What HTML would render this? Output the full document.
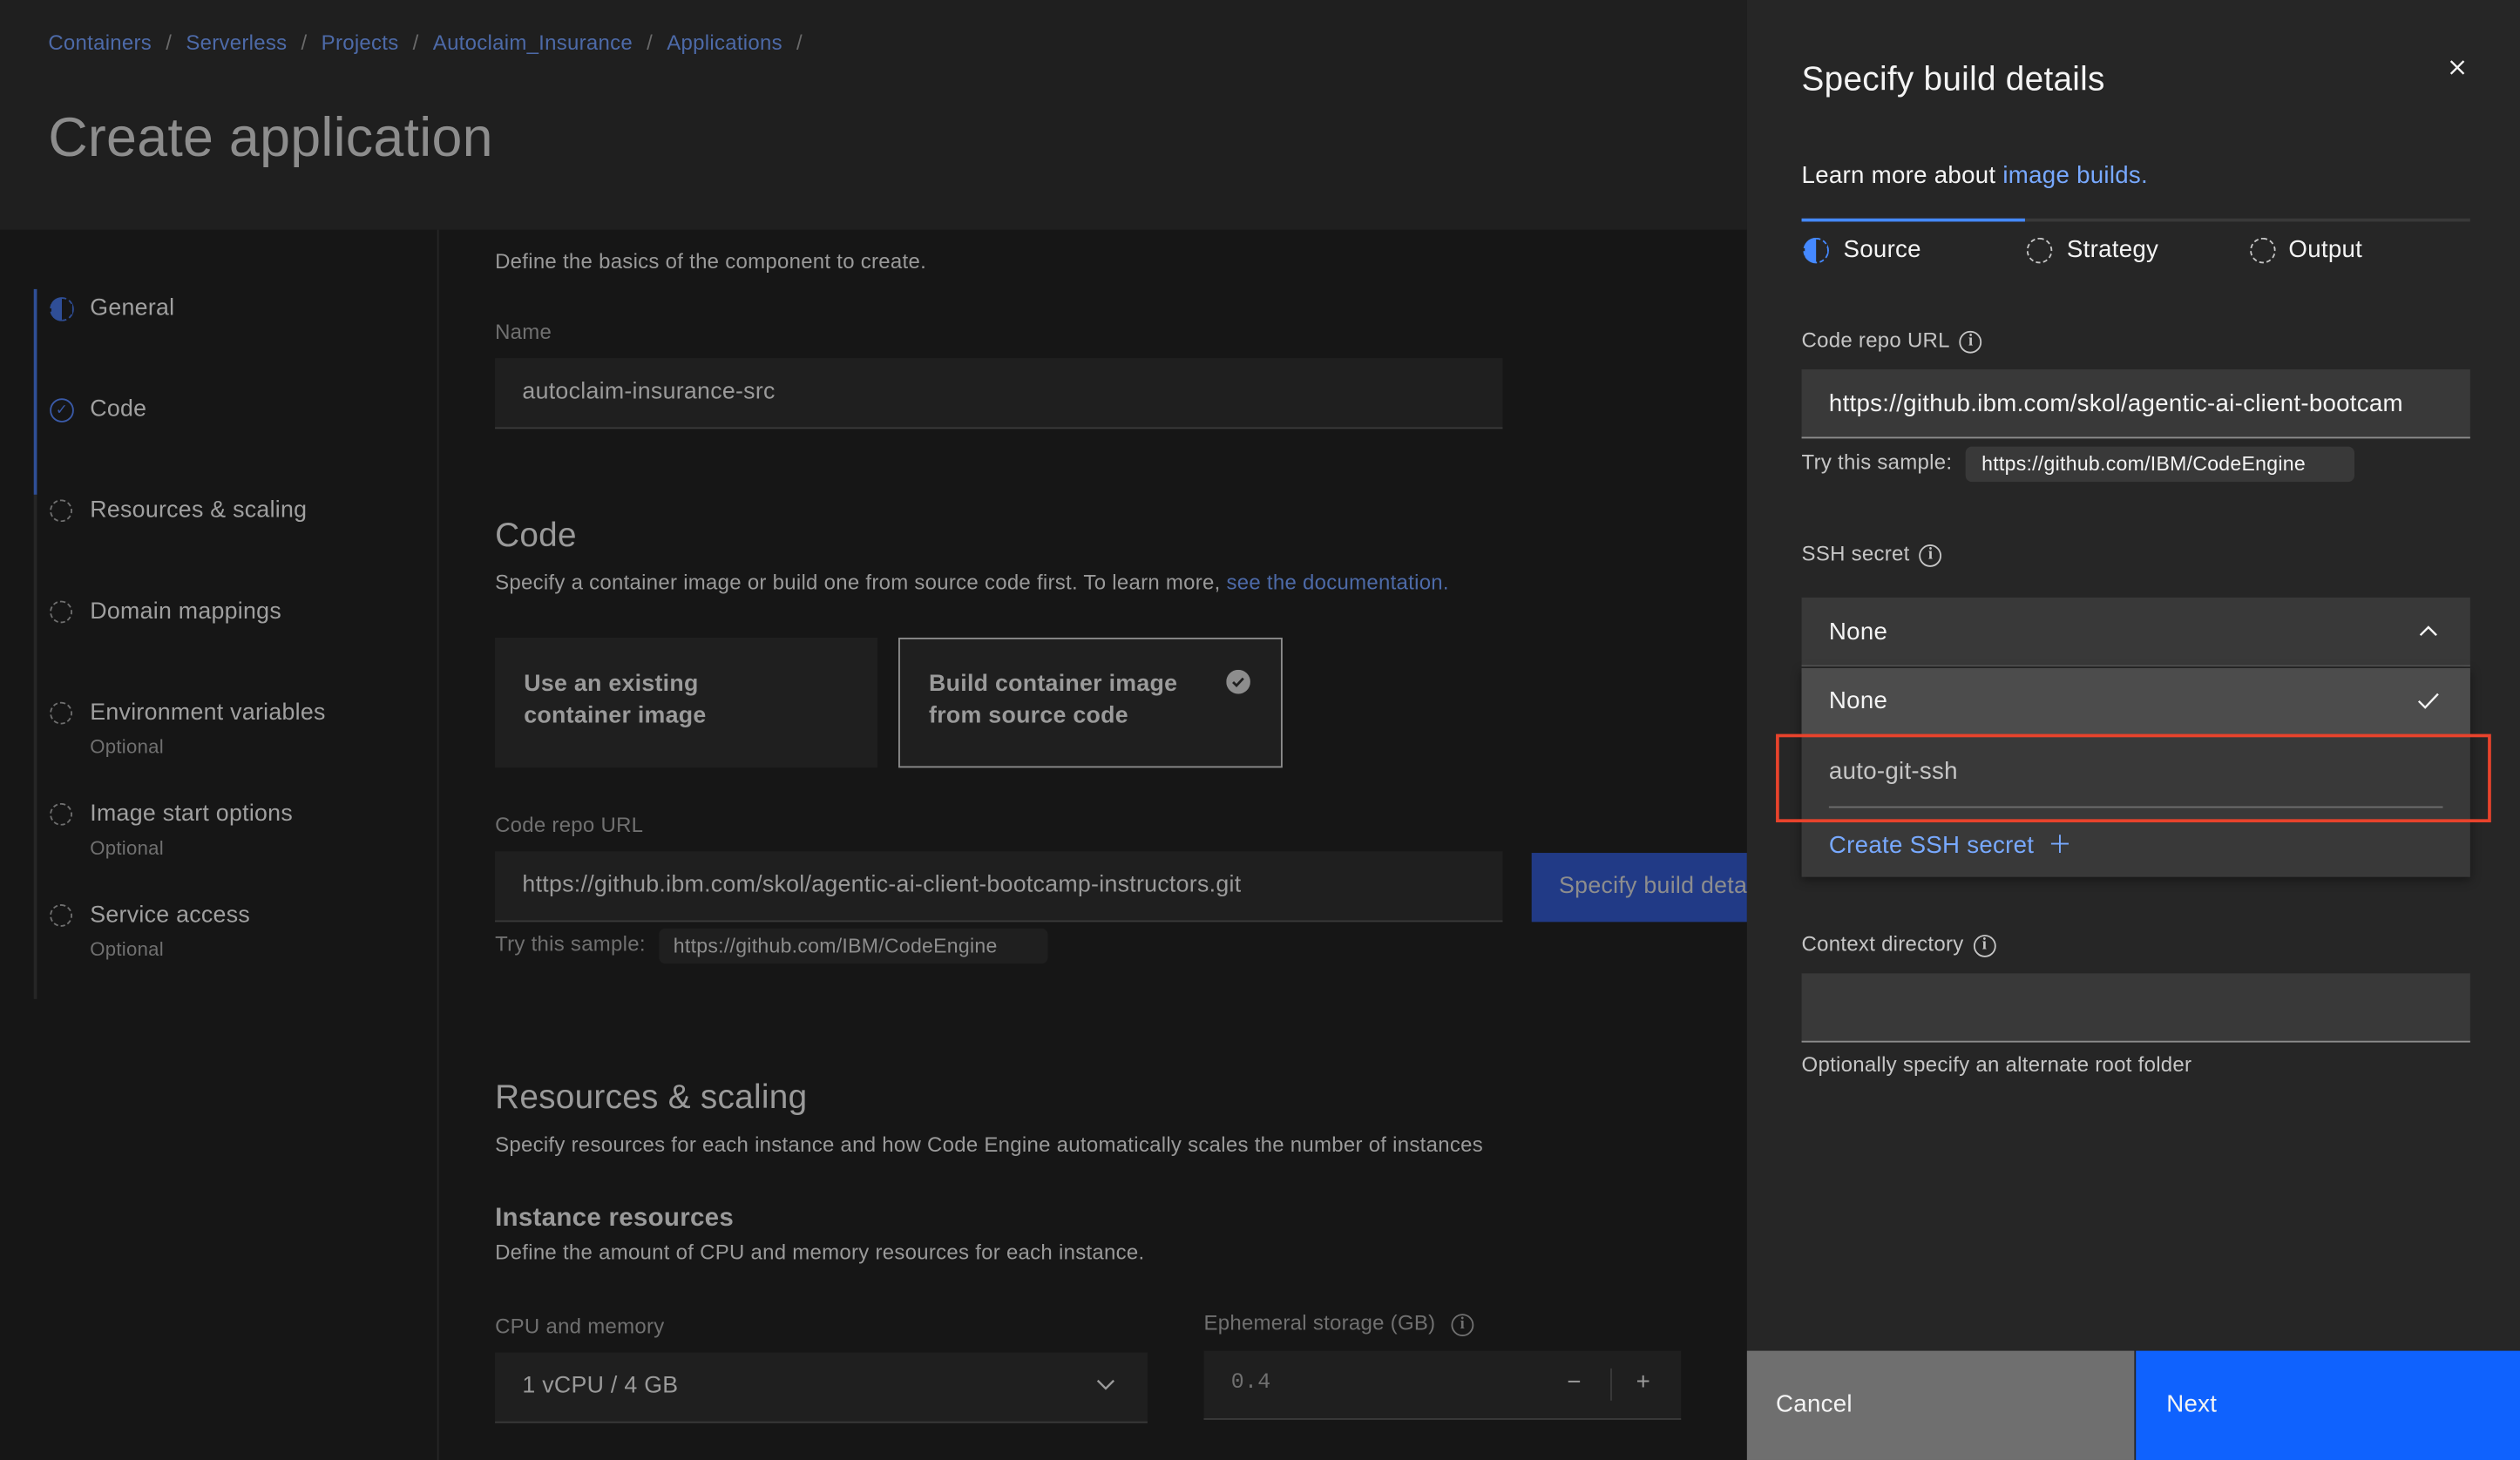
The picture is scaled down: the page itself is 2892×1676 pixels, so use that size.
<!DOCTYPE html><html><head><style>
*{margin:0;padding:0;box-sizing:border-box}
body{width:2892px;height:1676px;overflow:hidden;background:#161616;font-family:"Liberation Sans",sans-serif}
#w{width:1568px;height:909px;transform:scale(1.84439,1.84378);transform-origin:0 0;position:relative;background:#161616;letter-spacing:0.15px}
.a{position:absolute;white-space:nowrap}
.hd{left:0;top:0;width:1087px;height:143px;background:#1f1f1f}
.bc{color:#4d6aa8;font-size:13px;top:19px;word-spacing:1px}
.sl{color:#6a6a6a;margin:0 4px}
.g{color:#9a9a9a}
.gs{color:#707070;font-size:12px}
.fld{background:#1f1f1f;border-bottom:1px solid #3a3a3a}
.nav{color:#a0a0a0;font-size:14.5px}
.ic{width:14px;height:14px;border-radius:50%;border:1px dashed #6f6f6f}
.p{left:1087px;top:0;width:481px;height:909px;background:#262626}
.w1{color:#f4f4f4}.lb{color:#c6c6c6;font-size:13px}
.info{display:inline-block;width:14px;height:14px;border:1px solid #c6c6c6;border-radius:50%;font-size:10px;text-align:center;line-height:12px;color:#c6c6c6;vertical-align:middle;margin-left:6px;font-family:"Liberation Serif",serif;font-weight:bold}
</style></head><body><div id="w">
<div class="a hd"></div>
<div class="a bc" style="left:30px">Containers<span class="sl">&nbsp;/&nbsp;</span>Serverless<span class="sl">&nbsp;/&nbsp;</span>Projects<span class="sl">&nbsp;/&nbsp;</span>Autoclaim_Insurance<span class="sl">&nbsp;/&nbsp;</span>Applications<span class="sl">&nbsp;/</span></div>
<div class="a" style="left:30px;top:67px;font-size:34px;color:#8d8d8d;font-weight:300">Create application</div>
<div class="a" style="left:272px;top:143px;width:1px;height:766px;background:#262626"></div>
<div class="a" style="left:21px;top:180px;width:2px;height:128px;background:#2f4e96"></div>
<div class="a" style="left:21px;top:308px;width:2px;height:314px;background:#262626"></div>
<div class="a" style="left:31px;top:185px;width:15px;height:15px;border-radius:50%;border:1px dashed #2f4e96;background:linear-gradient(90deg,#2f4e96 50%,transparent 50%)"></div>
<div class="a nav" style="left:56px;top:184px">General</div>
<div class="a" style="left:31px;top:248px;width:15px;height:15px;border-radius:50%;border:1px solid #3a5aa8;color:#3a5aa8;font-size:9px;text-align:center;line-height:13px">✓</div>
<div class="a nav" style="left:56px;top:247px">Code</div>
<div class="a ic" style="left:31px;top:311px"></div><div class="a nav" style="left:56px;top:310px">Resources &amp; scaling</div>
<div class="a ic" style="left:31px;top:374px"></div><div class="a nav" style="left:56px;top:373px">Domain mappings</div>
<div class="a ic" style="left:31px;top:437px"></div><div class="a nav" style="left:56px;top:436px">Environment variables</div><div class="a gs" style="left:56px;top:458px">Optional</div>
<div class="a ic" style="left:31px;top:500px"></div><div class="a nav" style="left:56px;top:499px">Image start options</div><div class="a gs" style="left:56px;top:521px">Optional</div>
<div class="a ic" style="left:31px;top:563px"></div><div class="a nav" style="left:56px;top:562px">Service access</div><div class="a gs" style="left:56px;top:584px">Optional</div>

<div class="a g" style="left:308px;top:155px;font-size:13px">Define the basics of the component to create.</div>
<div class="a gs" style="left:308px;top:199px;font-size:13px">Name</div>
<div class="a fld" style="left:308px;top:223px;width:627px;height:44px"></div>
<div class="a g" style="left:325px;top:236px;font-size:14.5px">autoclaim-insurance-src</div>
<div class="a g" style="left:308px;top:322px;font-size:21px">Code</div>
<div class="a g" style="left:308px;top:355px;font-size:13px">Specify a container image or build one from source code first. To learn more, <span style="color:#4d6aa8">see the documentation.</span></div>
<div class="a" style="left:308px;top:397px;width:238px;height:81px;background:#1f1f1f"></div>
<div class="a g" style="left:326px;top:416px;font-size:14.5px;font-weight:bold;line-height:20px">Use an existing<br>container image</div>
<div class="a" style="left:559px;top:397px;width:239px;height:81px;background:#1f1f1f;border:1px solid #8d8d8d"></div>
<div class="a g" style="left:578px;top:416px;font-size:14.5px;font-weight:bold;line-height:20px">Build container image<br>from source code</div>
<svg class="a" style="left:763px;top:417px" width="15" height="15" viewBox="0 0 16 16"><circle cx="8" cy="8" r="8" fill="#8d8d8d"/><path d="M4.5 8.2l2.3 2.3 4.5-4.8" stroke="#1f1f1f" stroke-width="1.6" fill="none"/></svg>
<div class="a gs" style="left:308px;top:506px;font-size:13px">Code repo URL</div>
<div class="a fld" style="left:308px;top:530px;width:627px;height:44px"></div>
<div class="a g" style="left:325px;top:543px;font-size:14.5px">https://github.ibm.com/skol/agentic-ai-client-bootcamp-instructors.git</div>
<div class="a" style="left:953px;top:531px;width:134px;height:43px;background:#213a86;overflow:hidden"><span style="position:absolute;left:17px;top:13px;color:#8d8d8d;font-size:14.5px;white-space:nowrap">Specify build details</span></div>
<div class="a gs" style="left:308px;top:580px;font-size:13px">Try this sample:</div>
<div class="a" style="left:410px;top:578px;width:242px;height:22px;background:#1f1f1f;border-radius:4px;color:#8d8d8d;font-size:12.5px;padding:4px 9px">https://github.com/IBM/CodeEngine</div>
<div class="a g" style="left:308px;top:672px;font-size:21px">Resources &amp; scaling</div>
<div class="a g" style="left:308px;top:705px;font-size:13px">Specify resources for each instance and how Code Engine automatically scales the number of instances</div>
<div class="a g" style="left:308px;top:750px;font-size:16px;font-weight:bold">Instance resources</div>
<div class="a g" style="left:308px;top:772px;font-size:13px">Define the amount of CPU and memory resources for each instance.</div>
<div class="a gs" style="left:308px;top:818px;font-size:13px">CPU and memory</div>
<div class="a fld" style="left:308px;top:842px;width:406px;height:44px"></div>
<div class="a g" style="left:325px;top:855px;font-size:14.5px">1 vCPU / 4 GB</div>
<svg class="a" style="left:682px;top:858px" width="12" height="8" viewBox="0 0 12 8"><path d="M1 1.5l5 5 5-5" stroke="#9a9a9a" stroke-width="1.3" fill="none"/></svg>
<div class="a gs" style="left:749px;top:816px;font-size:13px">Ephemeral storage (GB) <span class="info" style="border-color:#707070;color:#707070">i</span></div>
<div class="a fld" style="left:749px;top:841px;width:297px;height:43px"></div>
<div class="a gs" style="left:766px;top:854px;font-size:13.5px;font-family:'Liberation Mono',monospace">0.4</div>
<div class="a g" style="left:975px;top:852px;font-size:15px">−</div>
<div class="a" style="left:1002px;top:852px;width:1px;height:20px;background:#3a3a3a"></div>
<div class="a g" style="left:1018px;top:852px;font-size:15px">+</div>

<div class="a p"></div>
<div class="a w1" style="left:1121px;top:38px;font-size:21px">Specify build details</div>
<svg class="a" style="left:1524px;top:37px" width="10" height="10" viewBox="0 0 10 10"><path d="M1 1l8 8M9 1l-8 8" stroke="#f4f4f4" stroke-width="1.3"/></svg>
<div class="a w1" style="left:1121px;top:101px;font-size:15px">Learn more about <span style="color:#78a9ff">image builds.</span></div>
<div class="a" style="left:1121px;top:136px;width:416px;height:2px;background:#393939"></div>
<div class="a" style="left:1121px;top:136px;width:139px;height:2px;background:#4589ff"></div>
<div class="a" style="left:1122px;top:148px;width:16px;height:16px;border-radius:50%;border:1px dashed #4589ff;background:linear-gradient(90deg,#4589ff 50%,transparent 50%)"></div>
<div class="a w1" style="left:1147px;top:147px;font-size:15px">Source</div>
<div class="a" style="left:1261px;top:148px;width:16px;height:16px;border-radius:50%;border:1px dashed #c6c6c6"></div>
<div class="a w1" style="left:1286px;top:147px;font-size:15px">Strategy</div>
<div class="a" style="left:1400px;top:148px;width:16px;height:16px;border-radius:50%;border:1px dashed #c6c6c6"></div>
<div class="a w1" style="left:1424px;top:147px;font-size:15px">Output</div>
<div class="a lb" style="left:1121px;top:204px">Code repo URL<span class="info">i</span></div>
<div class="a" style="left:1121px;top:230px;width:416px;height:43px;background:#393939;border-bottom:1px solid #8d8d8d"></div>
<div class="a w1" style="left:1138px;top:243px;font-size:15px">https://github.ibm.com/skol/agentic-ai-client-bootcam</div>
<div class="a lb" style="left:1121px;top:280px">Try this sample:</div>
<div class="a w1" style="left:1223px;top:278px;width:242px;height:22px;background:#393939;border-radius:4px;font-size:12.5px;padding:4px 10px">https://github.com/IBM/CodeEngine</div>
<div class="a lb" style="left:1121px;top:337px">SSH secret<span class="info">i</span></div>
<div class="a" style="left:1121px;top:372px;width:416px;height:43px;background:#393939;border-bottom:1px solid #525252"></div>
<div class="a w1" style="left:1138px;top:385px;font-size:15px">None</div>
<svg class="a" style="left:1505px;top:389px" width="12" height="8" viewBox="0 0 12 8"><path d="M1 6.5l5-5 5 5" stroke="#f4f4f4" stroke-width="1.3" fill="none"/></svg>
<div class="a" style="left:1121px;top:416px;width:416px;height:130px;background:#393939;box-shadow:0 2px 6px rgba(0,0,0,.4)"></div>
<div class="a" style="left:1121px;top:416px;width:416px;height:43px;background:#4c4c4c"></div>
<div class="a w1" style="left:1138px;top:428px;font-size:15px">None</div>
<svg class="a" style="left:1504px;top:431px" width="14" height="11" viewBox="0 0 14 11"><path d="M1 5.5l4 4 8-8.5" stroke="#f4f4f4" stroke-width="1.3" fill="none"/></svg>
<div class="a" style="left:1138px;top:472px;color:#c6c6c6;font-size:15px">auto-git-ssh</div>
<div class="a" style="left:1138px;top:502px;width:382px;height:1px;background:#6f6f6f"></div>
<div class="a" style="left:1138px;top:515px;color:#78a9ff;font-size:15px">Create SSH secret &nbsp;＋</div>
<div class="a" style="left:1105px;top:457px;width:445px;height:55px;border:2px solid #e8432c"></div>
<div class="a lb" style="left:1121px;top:580px">Context directory<span class="info">i</span></div>
<div class="a" style="left:1121px;top:606px;width:416px;height:43px;background:#393939;border-bottom:1px solid #8d8d8d"></div>
<div class="a lb" style="left:1121px;top:655px">Optionally specify an alternate root folder</div>
<div class="a" style="left:1087px;top:841px;width:241px;height:68px;background:#6f6f6f"></div>
<div class="a w1" style="left:1105px;top:866px;font-size:15px">Cancel</div>
<div class="a" style="left:1329px;top:841px;width:239px;height:68px;background:#0f62fe"></div>
<div class="a w1" style="left:1348px;top:866px;font-size:15px">Next</div>
</div></body></html>
